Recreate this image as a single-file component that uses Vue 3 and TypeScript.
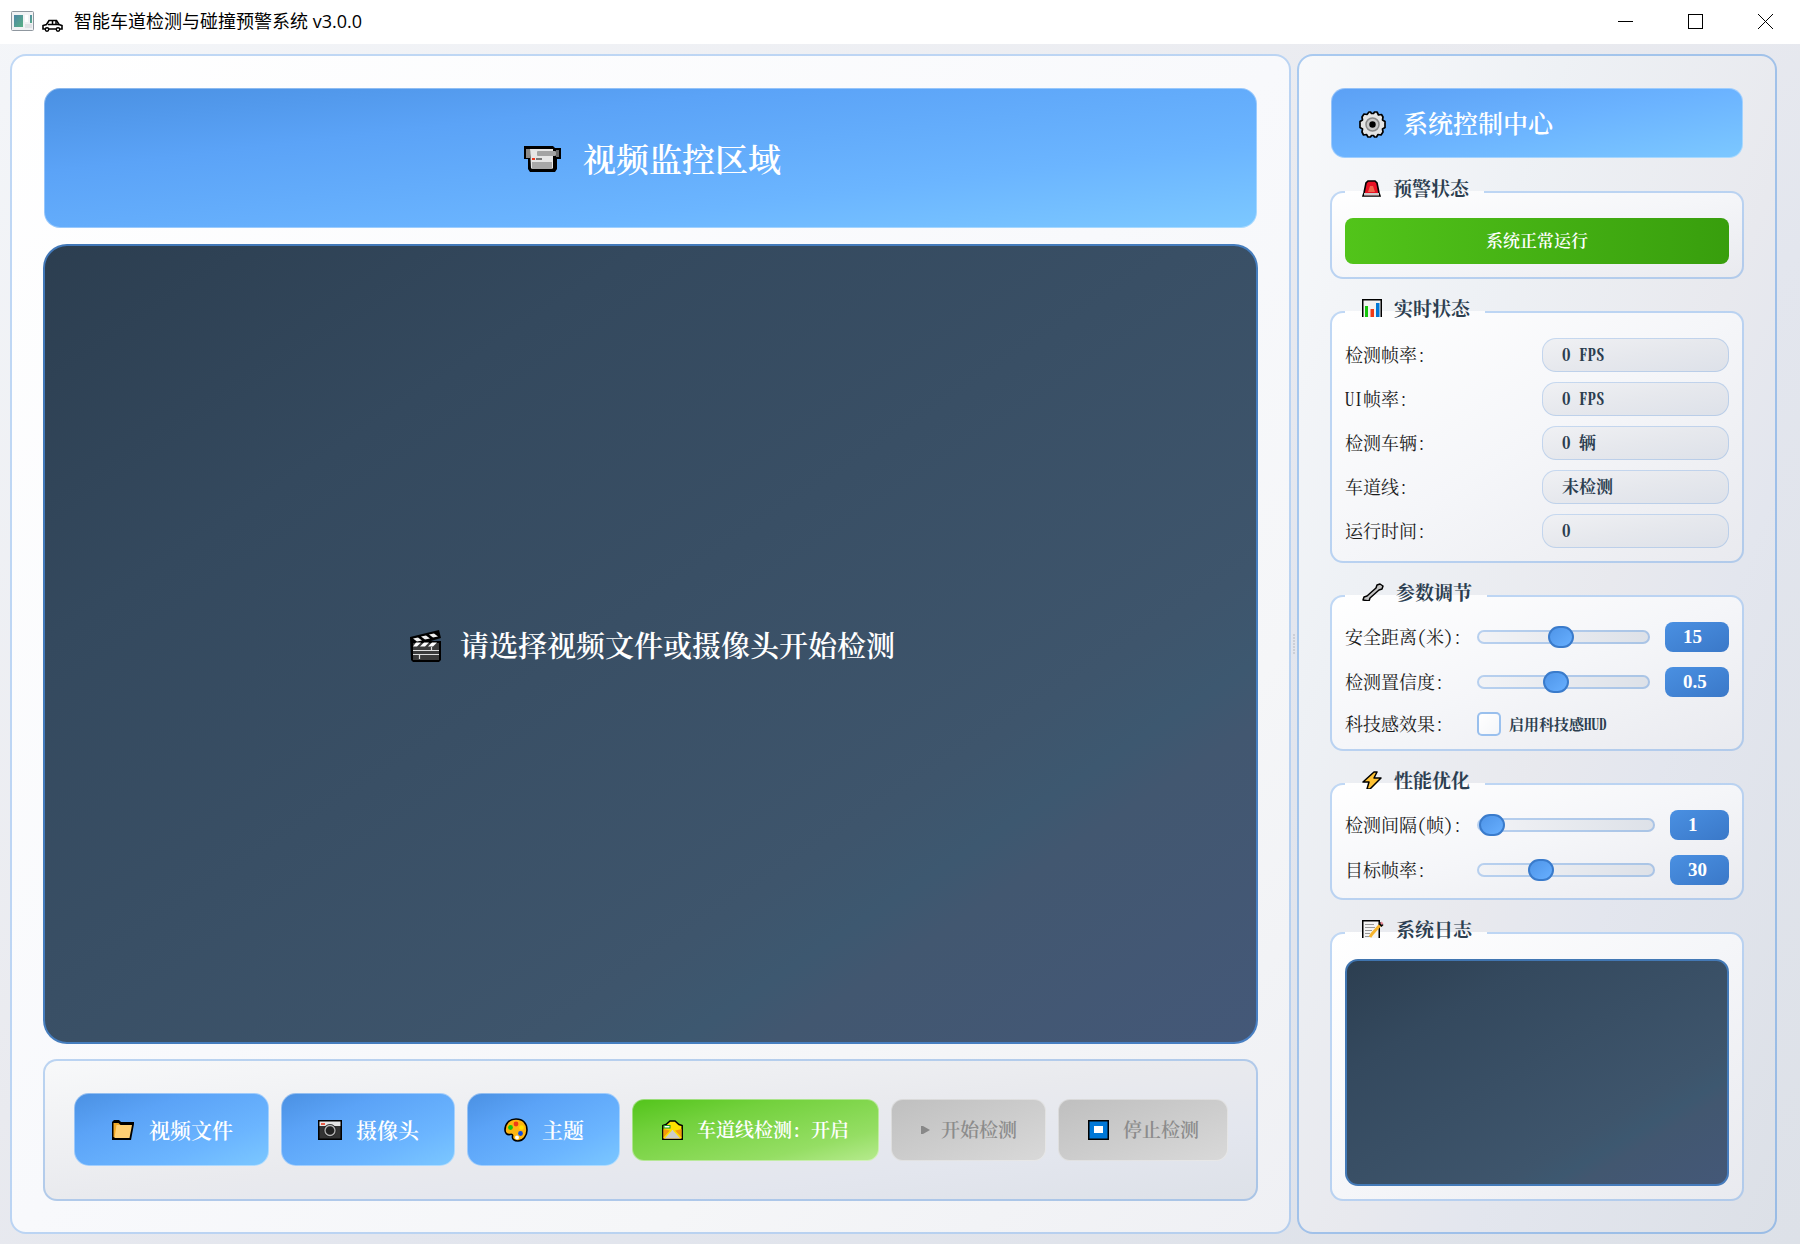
<script setup lang="ts">
import { ref } from 'vue'

interface StatusRow {
  id: string
  label: string
  value: string
}

interface SliderRow {
  id: string
  label: string
  min: number
  max: number
  step: number
  value: number
}

const statusRows: StatusRow[] = [
  { id: 'detect-fps', label: '检测帧率:', value: '0 FPS' },
  { id: 'ui-fps', label: 'UI帧率:', value: '0 FPS' },
  { id: 'vehicles', label: '检测车辆:', value: '0 辆' },
  { id: 'lane', label: '车道线:', value: '未检测' },
  { id: 'uptime', label: '运行时间:', value: '0' },
]

const params = ref<SliderRow[]>([
  { id: 'distance', label: '安全距离(米):', min: 1, max: 30, step: 1, value: 15 },
  { id: 'confidence', label: '检测置信度:', min: 0.1, max: 1, step: 0.1, value: 0.5 },
])

const perf = ref<SliderRow[]>([
  { id: 'interval', label: '检测间隔(帧):', min: 1, max: 10, step: 1, value: 1 },
  { id: 'target-fps', label: '目标帧率:', min: 15, max: 60, step: 1, value: 30 },
])

const hud = ref(false)
const laneOn = ref(true)
const log = ref('')
</script>

<template>
  <div class="window">
    <header class="titlebar">
      <svg class="app-icon" width="23" height="20" viewBox="0 0 23 20">
        <defs>
          <linearGradient id="pane" x1="0" y1="0" x2="1" y2="1">
            <stop offset="0" stop-color="#4f86a6" />
            <stop offset="1" stop-color="#58b083" />
          </linearGradient>
        </defs>
        <rect x=".5" y=".5" width="22" height="19" rx="1" fill="#f1f2f4" stroke="#8f979f" />
        <rect x="3" y="4" width="9" height="12" fill="url(#pane)" />
        <rect x="14" y="4" width="3" height="7" fill="#fff" />
        <rect x="19" y="4" width="2" height="8" fill="url(#pane)" />
        <rect x="14" y="13" width="7" height="4" fill="#dfe1e4" />
      </svg>
      <svg class="car" width="21" height="13" viewBox="0 0 21 13">
        <path d="M1 10V6.500L4.500 5.500 7 1.500h7.500L17 5.500l3 1V10z" fill="#fff" stroke="#000" stroke-width="1.600" />
        <path d="M6 5.500h11M10.500 2v4M14 2v3" stroke="#000" stroke-width="1.500" />
        <circle cx="5" cy="10.500" r="1.700" fill="#fff" stroke="#000" stroke-width="1.400" />
        <circle cx="16" cy="10.500" r="1.700" fill="#fff" stroke="#000" stroke-width="1.400" />
      </svg>
      <h1>智能车道检测与碰撞预警系统 v3.0.0</h1>
      <div class="win-controls">
        <button type="button" aria-label="最小化">
          <svg width="15" height="15" viewBox="0 0 15 15"><path d="M0 7.500h15" stroke="#000" /></svg>
        </button>
        <button type="button" aria-label="最大化">
          <svg width="15" height="15" viewBox="0 0 15 15"><rect x=".5" y=".5" width="14" height="14" fill="none" stroke="#000" /></svg>
        </button>
        <button type="button" aria-label="关闭">
          <svg width="15" height="15" viewBox="0 0 15 15"><path d="M0 0l15 15M15 0L0 15" stroke="#000" /></svg>
        </button>
      </div>
    </header>

    <main class="workspace">
      <section class="panel panel-left">
        <h2 class="banner">
          <svg width="37" height="26" viewBox="0 0 37 26">
            <path d="M0 0h29l2 2h6v11h-4v10l-2 3H6l-2-3V13H0z" fill="#000" />
            <path d="M2 3h4v9H2z" fill="#8a8a8a" />
            <path d="M6 3h23v19l-1 1H8l-1-1z" fill="#e6e6e6" />
            <rect x="13" y="5" width="19" height="5" rx="1" fill="#a3a3a3" />
            <path d="M32 4h3v7h-3z" fill="#6b6b6b" />
            <path d="M8 13h3" stroke="#e8371f" stroke-width="2" />
            <path d="M12 13h6" stroke="#777" stroke-width="2" />
            <rect x="8" y="16" width="20" height="7" fill="#a8a8a8" />
          </svg>
          <span>视频监控区域</span>
        </h2>

        <div class="video">
          <svg width="31" height="32" viewBox="0 0 31 32">
            <path d="M0 7L29 0l2 8-10 3h10v19l-2 2H3l-2-2z" fill="#000" />
            <path d="M3 8.500l5-1 4 3-5 1zM11 6.500l5-1 4 3-5 1zM19 4.500l5-1 4 3-5 1z" fill="#eee" />
            <path d="M3 13h26v17H3z" fill="#3b3b3b" />
            <path d="M6 12.500h5l-4 4H3zM14 12.500h5l-4 4h-5zM22 12.500h5l-4 4h-5z" fill="#fff" />
            <path d="M3 20.500h26M3 24.500h26M21.500 17v3.500M9.500 24.500V29" stroke="#ddd" stroke-width="1.200" />
          </svg>
          <span>请选择视频文件或摄像头开始检测</span>
        </div>

        <div class="toolbar">
          <button type="button" class="btn primary">
            <svg width="24" height="24" viewBox="0 0 24 24">
              <path d="M1 21V4l2-2h5l2 2h13v2l-3 16H1z" fill="#000" />
              <path d="M2.500 19V5h5l2 2H8L5 19.500z" fill="#f0a928" />
              <path d="M5.500 7h15.500L18.500 20h-15z" fill="#ffd073" />
            </svg>
            <span>视频文件</span>
          </button>
          <button type="button" class="btn primary">
            <svg width="24" height="24" viewBox="0 0 24 24">
              <path d="M0 2h24v20H0z" fill="#000" />
              <path d="M1.500 3.500h21V8h-21z" fill="#e6e6e6" />
              <path d="M1.500 8h21v12.500h-21z" fill="#333" />
              <path d="M3 6h4" stroke="#e8371f" stroke-width="1.600" />
              <circle cx="12" cy="12.500" r="6.500" fill="#222" />
              <circle cx="12" cy="12.500" r="5" fill="none" stroke="#b5b5b5" stroke-width="1.300" />
            </svg>
            <span>摄像头</span>
          </button>
          <button type="button" class="btn primary">
            <svg width="24" height="24" viewBox="0 0 24 24">
              <path d="M12 1c7 0 11 4.500 11 11 0 6-4 11-9 11-4 0-6-2-5.500-4.500C9 16.500 8 16 6 16.500 3 17 1 15 1 12 1 6 5 1 12 1z" fill="#ffb50f" stroke="#000" stroke-width="1.600" />
              <circle cx="6.500" cy="9.500" r="2.400" fill="#16c60c" />
              <circle cx="12" cy="6" r="2.400" fill="#f03a17" />
              <circle cx="17.500" cy="9.500" r="2.300" fill="#ffe000" />
              <circle cx="16.500" cy="15.500" r="2.400" fill="#0f4be0" />
              <circle cx="13" cy="19.500" r="2" fill="#fff" />
            </svg>
            <span>主题</span>
          </button>
          <button type="button" class="btn small success" @click="laneOn = !laneOn">
            <svg width="21" height="20" viewBox="0 0 21 20">
              <path d="M.800 19.200V5.500L4 4.500 8 1h5l4 3.500 3.200 1v13.700z" fill="#ffe100" stroke="#000" stroke-width="1.500" />
              <path d="M1.500 9l8 2h2l8-2v9.500h-18z" fill="#f59a0c" />
              <path d="M9.500 10h2l7 8.500h-16z" fill="#ccc" />
              <path d="M9.500 10L2 18M11.500 10l7.500 8" stroke="#ffe100" stroke-width="1.500" />
              <rect x="2" y="5.500" width="6" height="2.500" fill="#fff" stroke="#159a25" />
            </svg>
            <span>车道线检测: {{ laneOn ? '开启' : '关闭' }}</span>
          </button>
          <button type="button" class="btn small start" disabled>
            <svg width="9" height="10" viewBox="0 0 9 10"><path d="M0 1h2l7 4-7 4H0z" fill="#888" /></svg>
            <span>开始检测</span>
          </button>
          <button type="button" class="btn small" disabled>
            <svg width="21" height="20" viewBox="0 0 21 20">
              <rect x=".75" y=".75" width="19.500" height="18.500" fill="#0078d7" stroke="#000" stroke-width="1.500" />
              <rect x="6" y="6" width="9" height="7" fill="#fff" />
            </svg>
            <span>停止检测</span>
          </button>
        </div>
      </section>

      <div class="splitter" aria-hidden="true"></div>

      <aside class="panel panel-right">
        <h2 class="side-title">
          <svg width="27" height="27" viewBox="0 0 27 27">
            <path d="M10 1h1.500l1 1.500h2L15.500 1H18l1.500 3 3-.500L24 6l-.500 3L26 10.500v6L23.500 18l.500 3-2 3-3-.500-1.500 2.500h-2l-1-1.500h-2l-1 1.500H9l-1.500-2.500-3 .500L3 21l.500-3L1 16.500v-6L3.500 9 3 6l2-3 3 .500z" fill="#e4e4e4" stroke="#000" stroke-width="1.700" stroke-linejoin="round" />
            <circle cx="13.500" cy="13.500" r="6.500" fill="#c8c8c8" stroke="#8a8a8a" stroke-width="1.500" />
            <circle cx="13.500" cy="13.500" r="3.200" fill="#000" />
          </svg>
          <span>系统控制中心</span>
        </h2>

        <fieldset>
          <legend>
            <svg width="19" height="17" viewBox="0 0 19 17">
              <path d="M1 16l1-3L4 3l2-2h7l2 2 2 10 1 3z" fill="#e81224" stroke="#000" stroke-width="1.600" />
              <path d="M6 12l2-6h3l2 6z" fill="#f0644a" />
              <path d="M2 13h15v2.500H2z" fill="#ccc" />
            </svg>
            <span>预警状态</span>
          </legend>
          <div class="alert" role="status">系统正常运行</div>
        </fieldset>

        <fieldset>
          <legend>
            <svg width="20" height="18" viewBox="0 0 20 18">
              <path d="M.750 18V.750h18.500V18" fill="#f2f2f2" stroke="#000" stroke-width="1.500" />
              <path d="M3 7h3v11H3z" fill="#16c60c" />
              <path d="M8.500 10h3.500v8H8.500z" fill="#f03a17" />
              <path d="M14 4h3.500v14H14z" fill="#0078d7" />
            </svg>
            <span>实时状态</span>
          </legend>
          <dl class="status">
            <div v-for="row in statusRows" :key="row.id">
              <dt>{{ row.label }}</dt>
              <dd>{{ row.value }}</dd>
            </div>
          </dl>
        </fieldset>

        <fieldset>
          <legend>
            <svg width="22" height="18" viewBox="0 0 22 18">
              <path d="M1 17l1-3 3-1 9-8 1-3 3-1 3 2-1 3-3 1-9 8-1 3z" fill="#c4c4c4" stroke="#000" stroke-width="1.500" stroke-linejoin="round" />
            </svg>
            <span>参数调节</span>
          </legend>
          <div class="rows">
            <div v-for="row in params" :key="row.id" class="row">
              <label :for="row.id">{{ row.label }}</label>
              <input :id="row.id" v-model.number="row.value" type="range" :min="row.min" :max="row.max" :step="row.step" />
              <output class="wide" :for="row.id">{{ row.value }}</output>
            </div>
            <div class="row check-row">
              <label for="hud">科技感效果:</label>
              <label class="check"><input id="hud" v-model="hud" type="checkbox" /><span>启用科技感HUD</span></label>
            </div>
          </div>
        </fieldset>

        <fieldset>
          <legend>
            <svg width="20" height="18" viewBox="0 0 20 18">
              <path d="M12 1L1 11h6L5 18h3l11-11h-7l3-6z" fill="#ffc233" stroke="#000" stroke-width="1.500" stroke-linejoin="round" />
            </svg>
            <span>性能优化</span>
          </legend>
          <div class="rows">
            <div v-for="row in perf" :key="row.id" class="row">
              <label :for="row.id">{{ row.label }}</label>
              <input :id="row.id" v-model.number="row.value" type="range" :min="row.min" :max="row.max" :step="row.step" />
              <output :for="row.id">{{ row.value }}</output>
            </div>
          </div>
        </fieldset>

        <fieldset class="log">
          <legend>
            <svg width="22" height="18" viewBox="0 0 22 18">
              <path d="M.750 18V.750h16.500V18" fill="#f4f4f4" stroke="#000" stroke-width="1.500" />
              <path d="M3 4.500h9M3 7.500h10M3 10.500h7M3 13.500h5M3 16.500h5" stroke="#999" />
              <path d="M19 4l-9 10-2 3" stroke="#f7b42c" stroke-width="3" fill="none" />
              <path d="M17.500 3l3 3" stroke="#000" stroke-width="3" />
              <path d="M19 4l1.500-1.500" stroke="#e98a97" stroke-width="2.500" />
            </svg>
            <span>系统日志</span>
          </legend>
          <textarea v-model="log" aria-label="系统日志" readonly></textarea>
        </fieldset>
      </aside>
    </main>
  </div>
</template>

<style>
body {
  margin: 0;
}
</style>

<style scoped>
.window {
  --edge: rgba(74, 144, 226, 0.35);
  --ink: #2c3e50;
  box-sizing: border-box;
  min-height: 100vh;
  display: flex;
  flex-direction: column;
  background: linear-gradient(to bottom right, #f4f6f9, #e9eaef 45%, #e3e6ee 60%, #dde1e8);
  font-family: "Noto Serif CJK SC", "Noto Sans CJK SC", serif;
  font-feature-settings: "hwid";
  color: var(--ink);
}

.window *,
.window *::before {
  box-sizing: border-box;
}

svg {
  display: block;
  flex: none;
}

h1,
h2,
dl,
dd {
  margin: 0;
}

button,
input,
textarea {
  font: inherit;
  font-feature-settings: inherit;
  margin: 0;
}

.titlebar {
  height: 44px;
  display: flex;
  align-items: center;
  padding: 0 0 2px 11px;
  background: #fff;
}

.car {
  margin: 8px 11px 0 8px;
}

h1 {
  font: 400 18px/24px "Open Sans", "Noto Sans CJK SC", sans-serif;
  color: #000;
}

.win-controls {
  margin-left: auto;
  display: flex;
}

.win-controls button {
  width: 70px;
  height: 42px;
  padding: 0;
  border: 0;
  background: none;
  display: grid;
  place-items: center;
}

.workspace {
  flex: 1;
  display: flex;
  padding: 10px 23px 10px 10px;
}

.panel {
  display: flex;
  flex-direction: column;
  border: 2px solid var(--edge);
  border-radius: 16px;
  padding: 31px;
  background-clip: border-box;
  background-origin: border-box;
}

.panel-left {
  flex: 1;
  min-width: 0;
  gap: 15px;
  background-image: linear-gradient(to bottom right, #fff, #f8f9fc 50%, #f5f6f8 75%, #eff0f4);
}

.panel-right {
  width: 480px;
  flex: none;
  gap: 19px;
  border-color: rgba(74, 144, 226, 0.45);
  background-image: linear-gradient(to bottom right, #f8f9fb, #eef1f5 28%, #e8e9ee 55%, #e3e6ee 68%, #dce0e7);
}

.splitter {
  width: 6px;
  flex: none;
  align-self: center;
  height: 20px;
  background: radial-gradient(circle, #b4b8c0 1px, transparent 1px) center / 4px 3px repeat-y;
}

.banner {
  height: 140px;
  margin: 1px;
  padding-left: 4px;
  display: flex;
  align-items: center;
  justify-content: center;
  gap: 22px;
  border: 1px solid rgba(255, 255, 255, 0.35);
  border-radius: 16px;
  background: linear-gradient(to bottom right, #4a90e2, #5ba3f7 30%, #6bb5ff 70%, #7cc8ff) border-box;
  color: #fff;
  font-size: 33px;
  line-height: 40px;
  font-weight: 600;
}

.banner svg,
.video svg,
.side-title svg {
  margin-top: 2px;
}

.video {
  flex: 1;
  min-height: 300px;
  padding: 2px 0 0 4px;
  display: flex;
  align-items: center;
  justify-content: center;
  gap: 19px;
  border: 2px solid rgba(74, 144, 226, 0.7);
  border-radius: 24px;
  background: linear-gradient(to bottom right, #2c3e50, #34495e 25%, #3e556c 70%, #3d5870 76%, #425770 80%, #445878) border-box;
  color: #fff;
  font-size: 29px;
  line-height: 36px;
  font-weight: 600;
}

.toolbar {
  display: flex;
  align-items: center;
  gap: 12px;
  padding: 32px 29px 33px;
  border: 2px solid var(--edge);
  border-radius: 14px;
  background: linear-gradient(to bottom right, #f8f9fa, #e9eaee 50%, #e3e6ee 75%, #dde1e8) border-box;
}

.btn {
  height: 73px;
  padding: 0 35px 0 36px;
  display: flex;
  align-items: center;
  gap: 14px;
  border: 1px solid rgba(255, 255, 255, 0.4);
  border-radius: 15px;
  color: #fff;
  font-size: 21px;
  line-height: 28px;
  font-weight: 600;
  white-space: nowrap;
}

.btn span,
.side-title span {
  padding-bottom: 2px;
}

.primary {
  background: linear-gradient(to bottom right, #4a90e2, #5ba3f7 30%, #6bb5ff 70%, #7cc8ff) border-box;
}

.small {
  height: 62px;
  padding: 0 29px;
  border-radius: 12px;
  font-size: 19px;
}

.success {
  background: linear-gradient(to bottom right, #52c41a, #73d13d 30%, #95de64 75%, #b7eb8f) border-box;
}

.btn:disabled {
  padding-right: 28px;
  background: linear-gradient(to bottom right, #bfbfbf, #d9d9d9) border-box;
  color: #8c8c8c;
}

.start {
  gap: 11px;
}

.side-title {
  height: 70px;
  margin: 1px;
  padding: 0 27px;
  display: flex;
  align-items: center;
  gap: 17px;
  border: 1px solid rgba(255, 255, 255, 0.35);
  border-radius: 14px;
  background: linear-gradient(to bottom right, #5ba0f5, #6bb3ff 50%, #7cc8ff) border-box;
  color: #fff;
  font-size: 25px;
  line-height: 32px;
  font-weight: 600;
}

fieldset {
  min-width: 0;
  margin: 0;
  padding: 12px 13px 13px;
  border: 2px solid var(--edge);
  border-radius: 13px;
  background: linear-gradient(to bottom right, #fff, #f5f6f9 50%, #e9eaef) border-box;
}

legend {
  height: 28px;
  padding: 0 15px 8px 17px;
  display: flex;
  align-items: center;
  gap: 12px;
  font-size: 19px;
  line-height: 20px;
  font-weight: 700;
}

.alert {
  height: 46px;
  border-radius: 8px;
  background: linear-gradient(to right, #52c41a, #389e0d);
  color: #fff;
  text-align: center;
  font-size: 17px;
  line-height: 44px;
  font-weight: 600;
}

.status {
  display: flex;
  flex-direction: column;
  gap: 10px;
}

.status div {
  display: flex;
  justify-content: space-between;
  align-items: center;
}

dt,
.row > label:first-child {
  padding-bottom: 2px;
  font-size: 18px;
  line-height: 24px;
  color: #1c1c1c;
  white-space: nowrap;
}

dd {
  width: 187px;
  height: 34px;
  padding-left: 19px;
  border: 1px solid rgba(74, 144, 226, 0.25);
  border-radius: 14px;
  background: linear-gradient(to bottom right, #f0f1f4, #e6e8ed 50%, #dde1e9) border-box;
  font-size: 17px;
  line-height: 30px;
  font-weight: 700;
}

.rows {
  display: flex;
  flex-direction: column;
  gap: 15px;
}

.row {
  height: 30px;
  display: flex;
  align-items: center;
  gap: 15px;
}

.check-row {
  height: 24px;
}

.row > label:first-child {
  width: 117px;
  flex: none;
}

output {
  width: 59px;
  height: 30px;
  flex: none;
  padding-left: 18px;
  border-radius: 8px;
  background: linear-gradient(to bottom right, #4a90e2, #3a78c8);
  color: #fff;
  font-family: "Liberation Serif", serif;
  font-size: 19px;
  line-height: 30px;
  font-weight: 700;
}

output.wide {
  width: 64px;
}

input[type="range"] {
  appearance: none;
  flex: 1;
  min-width: 0;
  height: 14px;
  border: 2px solid var(--edge);
  border-radius: 7px;
  background: linear-gradient(to right, #f2f3f6, #dde1e8) border-box;
}

input[type="range"]::-webkit-slider-runnable-track {
  height: 10px;
}

input[type="range"]::-webkit-slider-thumb {
  appearance: none;
  box-sizing: border-box;
  width: 26px;
  height: 22px;
  margin-top: -6px;
  border: 2px solid #3a7bcb;
  border-radius: 11px;
  background: linear-gradient(to bottom right, #4f95e8, #67afff);
}

.check {
  display: flex;
  align-items: center;
  gap: 8px;
  font-size: 15px;
  line-height: 24px;
  font-weight: 700;
  white-space: nowrap;
}

input[type="checkbox"] {
  appearance: none;
  width: 24px;
  height: 24px;
  border: 2px solid rgba(74, 144, 226, 0.55);
  border-radius: 5px;
  background: linear-gradient(to bottom right, #fff, #f4f6f9);
}

input[type="checkbox"]:checked {
  background: #4a90e2;
}

.log {
  flex: 1;
  display: flex;
  flex-direction: column;
}

textarea {
  flex: 1;
  width: 100%;
  min-height: 120px;
  display: block;
  resize: none;
  padding: 12px;
  border: 2px solid rgba(74, 144, 226, 0.65);
  border-radius: 13px;
  background: linear-gradient(to bottom right, #2c3e50, #34495e 25%, #3e556c 70%, #3d5870 76%, #425770 80%, #445878) border-box;
  color: #fff;
  font-size: 15px;
}
</style>
